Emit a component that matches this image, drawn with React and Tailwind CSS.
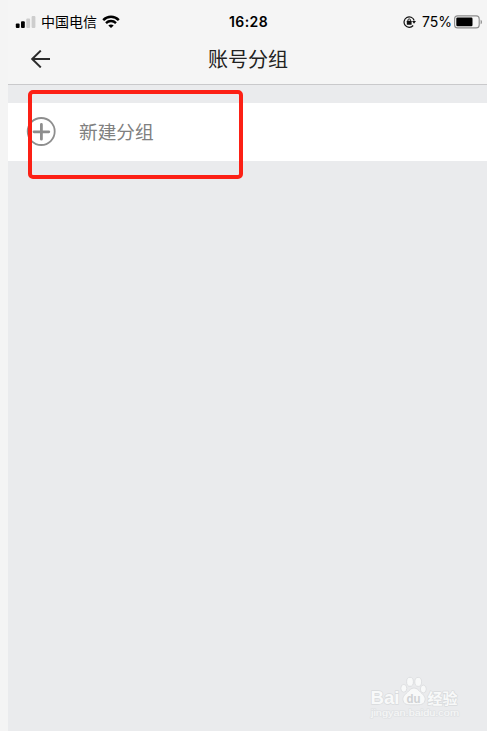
function SignalIcon() {
  return (
    <svg width="21" height="14" viewBox="0 0 21 14" className="shrink-0">
      <rect x="0.8" y="8.5" width="3.8" height="4.5" rx="1" fill="#000" />
      <rect x="6" y="6.3" width="3.8" height="6.7" rx="1" fill="#000" />
      <rect x="11.3" y="3.4" width="3.8" height="9.6" rx="1" fill="#cdcdcd" />
      <rect x="16.6" y="1" width="3.8" height="12" rx="1" fill="#cdcdcd" />
    </svg>
  );
}

function WifiIcon() {
  return (
    <svg width="18" height="14" viewBox="0 0 18 14" className="shrink-0" fill="none" stroke="#000">
      <path d="M1.2 5.1C5.6 .7 12.4 .7 16.8 5.1" strokeWidth="2.5" />
      <path d="M4 8.1c2.8-2.8 7.2-2.8 10 0" strokeWidth="2.3" />
      <path d="M9 13.1 6.3 10.5c1.5-1.4 3.9-1.4 5.4 0z" fill="#000" stroke="none" />
    </svg>
  );
}

function RotationLockIcon() {
  return (
    <svg width="13" height="12" viewBox="0 0 13 12" className="shrink-0" fill="none" stroke="#111">
      <path d="M11.2 4.5A5.2 5.2 0 1 0 10.2 9.5" strokeWidth="1.2" />
      <path d="M9 5h4l-2 2.8z" fill="#111" stroke="none" />
      <rect x="3.8" y="4.8" width="4.8" height="3.9" rx=".5" fill="#111" stroke="none" />
      <path d="M4.9 5.2V4.2a1.3 1.3 0 0 1 2.6 0v1" strokeWidth=".9" />
    </svg>
  );
}

function BatteryIcon() {
  return (
    <svg width="29" height="14" viewBox="0 0 29 14" className="shrink-0">
      <rect x="0.6" y="0.9" width="24.6" height="12" rx="3" fill="none" stroke="#8c8c8c" strokeWidth="1.1" />
      <rect x="2.3" y="2.6" width="16.2" height="8.6" rx="1.2" fill="#000" />
      <path d="M26.6 4.7c1.8.6 1.8 4 0 4.6z" fill="#8c8c8c" />
    </svg>
  );
}

function StatusBar() {
  return (
    <div className="grid h-11 grid-cols-3 items-center pl-[7px] pr-1 text-black">
      <div className="flex items-center">
        <SignalIcon />
        <span className="ml-[5px] whitespace-nowrap pb-0.5 text-[14px] leading-5">中国电信</span>
        <span className="ml-[5px]">
          <WifiIcon />
        </span>
      </div>
      <div className="pr-px text-center font-['Inter'] text-[14px] font-semibold leading-5 tracking-[0.4px]">16:28</div>
      <div className="flex items-center justify-end">
        <RotationLockIcon />
        <span className="ml-1.5 mr-0.5 font-['Inter'] text-[14px] leading-5">75%</span>
        <BatteryIcon />
      </div>
    </div>
  );
}

function NavBar() {
  return (
    <div className="grid h-[41px] grid-cols-3 items-center border-b border-[#c9c9cb] pb-[11px]">
      <svg width="20" height="18" viewBox="0 0 20 18" className="ml-[22px]" fill="none" stroke="#2b2b2b" strokeWidth="2">
        <path d="M20 9H2.2M10.8.6 2.2 9l8.6 8.4" />
      </svg>
      <h1 className="whitespace-nowrap pl-px text-center text-[20px] leading-7 text-[#222]">账号分组</h1>
    </div>
  );
}

function Watermark() {
  return (
    <div className="absolute left-[369px] top-[674px]">
      <svg width="92" height="46" viewBox="0 0 92 46" fill="#f8f9f9" stroke="#d9dbdd" strokeWidth="1.4" strokeLinejoin="round">
        <text x="1.5" y="30" fontSize="19" fontWeight="700" fontFamily="Liberation Sans" textLength="29" lengthAdjust="spacingAndGlyphs" paintOrder="stroke">
          Bai
        </text>
        <g strokeWidth=".8">
          <ellipse cx="34.8" cy="14.3" rx="3" ry="3.9" />
          <ellipse cx="41" cy="7.8" rx="3.4" ry="4.5" />
          <ellipse cx="49.2" cy="7.9" rx="3.4" ry="4.5" />
          <ellipse cx="54.3" cy="15" rx="3" ry="3.9" />
          <path d="M45 14c-3 0-4.5 2.3-6.5 4.2-3.2 2.9-5.4 5.2-4.3 8.8 1.3 4.3 6 3.8 10.8 3.8s9.5.5 10.8-3.8c1.1-3.6-1.1-5.9-4.3-8.8-2-1.9-3.5-4.2-6.5-4.2z" />
        </g>
        <text x="37.5" y="28.5" fontSize="13" fontWeight="700" fontFamily="Liberation Sans" fill="#d0d2d4" stroke="none" textLength="14" lengthAdjust="spacingAndGlyphs">
          du
        </text>
        <text x="58.5" y="29.5" fontSize="15" fontWeight="700" fontFamily="Noto Sans CJK SC" paintOrder="stroke">
          经验
        </text>
        <text x="2" y="41.8" fontSize="9" fontFamily="Liberation Sans" fill="#f7f8f8" stroke="#e1e3e5" strokeWidth="1.6" textLength="88" lengthAdjust="spacingAndGlyphs" paintOrder="stroke">
          jingyan.baidu.com
        </text>
      </svg>
    </div>
  );
}

export default function App() {
  return (
    <div className="relative h-[731px] w-[487px] overflow-hidden bg-[#f4f4f4] pl-2 font-['Noto_Sans_CJK_SC',sans-serif]">
      <div className="flex h-full flex-col bg-[#eaebed]">
        <header className="bg-[#f5f5f5]">
          <StatusBar />
          <NavBar />
        </header>
        <button type="button" className="mt-[18px] flex h-[58px] items-center bg-white pl-[18px] text-left">
          <svg width="30" height="30" viewBox="0 0 30 30" fill="none" stroke="#8e8e8e">
            <circle cx="15.2" cy="14.5" r="13.5" strokeWidth="1.8" />
            <path d="M15.4 7.4v14.8M8 14.8h14.8" strokeWidth="2.8" strokeLinecap="round" />
          </svg>
          <span className="ml-[23px] pb-0.5 text-[18.7px] leading-7 text-[#808080]">新建分组</span>
        </button>
      </div>

      {/* highlight around the new group row */}
      <div className="absolute left-[28px] top-[90px] h-[89px] w-[215px] rounded-[5px] border-4 border-[#fc2015]" />
      <Watermark />
    </div>
  );
}
